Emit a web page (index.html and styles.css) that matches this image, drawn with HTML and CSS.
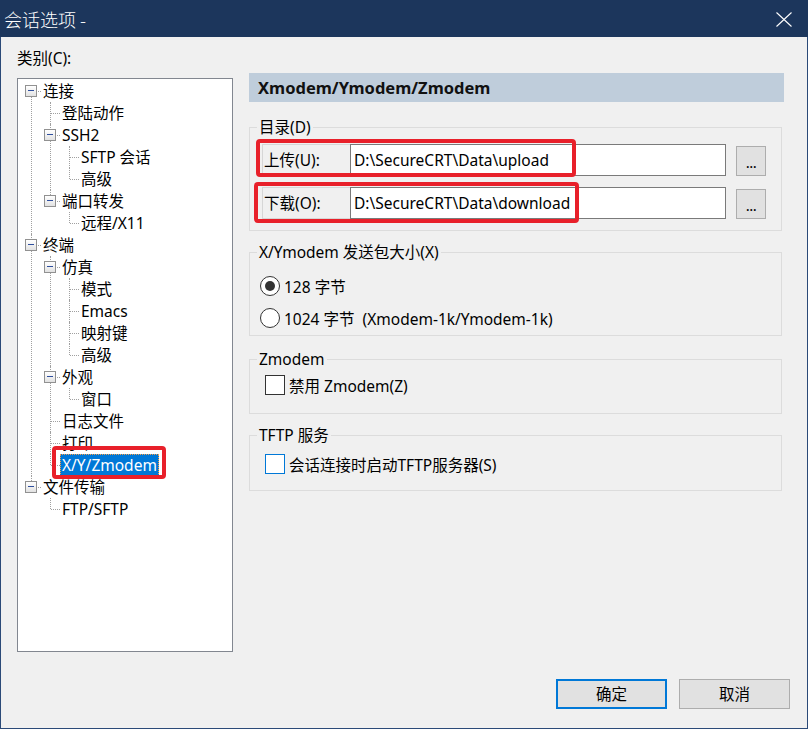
FILE: index.html
```html
<!DOCTYPE html>
<html lang="zh-CN">
<head>
<meta charset="utf-8">
<title>会话选项</title>
<link rel="stylesheet" href="styles.css">
</head>
<body>
<div class="window">
  <div class="titlebar">
    <span class="title">会话选项 -</span>
    <svg class="close" width="16" height="15" viewBox="0 0 16 15"><path d="M0.5 0.5 L15.5 14.5 M15.5 0.5 L0.5 14.5" stroke="#ffffff" stroke-width="1.1" fill="none"/></svg>
  </div>
  <div class="content">
    <div class="main">
      <div class="left">
        <div class="cat-label">类别(C):</div>
        <div class="tree-box">
          <ul class="tree">
            <li><div class="row"><span class="exp"></span><span class="lbl">连接</span></div>
              <ul>
                <li><div class="row"><span class="noexp"></span><span class="lbl">登陆动作</span></div></li>
                <li><div class="row"><span class="exp"></span><span class="lbl">SSH2</span></div>
                  <ul>
                    <li><div class="row"><span class="noexp"></span><span class="lbl">SFTP 会话</span></div></li>
                    <li><div class="row"><span class="noexp"></span><span class="lbl">高级</span></div></li>
                  </ul>
                </li>
                <li><div class="row"><span class="exp"></span><span class="lbl">端口转发</span></div>
                  <ul>
                    <li><div class="row"><span class="noexp"></span><span class="lbl">远程/X11</span></div></li>
                  </ul>
                </li>
              </ul>
            </li>
            <li><div class="row"><span class="exp"></span><span class="lbl">终端</span></div>
              <ul>
                <li><div class="row"><span class="exp"></span><span class="lbl">仿真</span></div>
                  <ul>
                    <li><div class="row"><span class="noexp"></span><span class="lbl">模式</span></div></li>
                    <li><div class="row"><span class="noexp"></span><span class="lbl">Emacs</span></div></li>
                    <li><div class="row"><span class="noexp"></span><span class="lbl">映射键</span></div></li>
                    <li><div class="row"><span class="noexp"></span><span class="lbl">高级</span></div></li>
                  </ul>
                </li>
                <li><div class="row"><span class="exp"></span><span class="lbl">外观</span></div>
                  <ul>
                    <li><div class="row"><span class="noexp"></span><span class="lbl">窗口</span></div></li>
                  </ul>
                </li>
                <li><div class="row"><span class="noexp"></span><span class="lbl">日志文件</span></div></li>
                <li><div class="row"><span class="noexp"></span><span class="lbl">打印</span></div></li>
                <li><div class="row"><span class="noexp"></span><span class="lbl sel">X/Y/Zmodem</span></div></li>
              </ul>
            </li>
            <li><div class="row"><span class="exp"></span><span class="lbl">文件传输</span></div>
              <ul>
                <li><div class="row"><span class="noexp"></span><span class="lbl">FTP/SFTP</span></div></li>
              </ul>
            </li>
          </ul>
        </div>
      </div>
      <div class="right">
        <div class="header">Xmodem/Ymodem/Zmodem</div>
        <fieldset class="group g-dir">
          <legend>目录(D)</legend>
          <div class="dir-row up">
            <span class="dir-label">上传(U):</span>
            <span class="dir-input">D:\SecureCRT\Data\upload</span>
            <span class="browse">...</span>
          </div>
          <div class="dir-row down">
            <span class="dir-label">下载(O):</span>
            <span class="dir-input">D:\SecureCRT\Data\download</span>
            <span class="browse">...</span>
          </div>
        </fieldset>
        <fieldset class="group g-size">
          <legend>X/Ymodem 发送包大小(X)</legend>
          <div class="opt"><span class="radio checked"></span><span>128 字节</span></div>
          <div class="opt opt2"><span class="radio"></span><span>1024 字节&nbsp;&nbsp;(Xmodem-1k/Ymodem-1k)</span></div>
        </fieldset>
        <fieldset class="group g-z">
          <legend>Zmodem</legend>
          <div class="opt chk-row"><span class="check"></span><span>禁用 Zmodem(Z)</span></div>
        </fieldset>
        <fieldset class="group g-tftp">
          <legend>TFTP 服务</legend>
          <div class="opt chk-row"><span class="check focus"></span><span>会话连接时启动TFTP服务器(S)</span></div>
        </fieldset>
      </div>
    </div>
    <div class="buttons">
      <span class="btn default">确定</span>
      <span class="btn">取消</span>
    </div>
  </div>
</div>
</body>
</html>
```
FILE: styles.css
```css
*, *::before, *::after { box-sizing: border-box; }
html, body { margin: 0; padding: 0; }
body {
  width: 808px;
  height: 729px;
  overflow: hidden;
  font-family: "Noto Sans", "Noto Sans CJK SC", sans-serif;
  font-size: 15.5px;
  color: #000;
  background: #f0f0f0;
}
.window {
  width: 808px;
  height: 729px;
  border: 1px solid #2b4a78;
  border-top: none;
  display: flex;
  flex-direction: column;
  background: #f0f0f0;
}
.titlebar {
  height: 37px;
  margin: 0 -1px;
  background: #1c365c;
  display: flex;
  align-items: center;
  color: #fff;
  padding-left: 4px;
}
.title {
  font-size: 18px;
  line-height: 24px;
  font-family: "Noto Sans CJK SC", sans-serif;
  font-weight: 300;
}
.close {
  margin-left: auto;
  margin-right: 16px;
  margin-top: 1px;
}
.content {
  flex: 1;
  display: flex;
  flex-direction: column;
  padding: 11px 17px 0 16px;
}
.main {
  display: flex;
  gap: 16px;
}
.left { width: 216px; }
.cat-label {
  line-height: 20px;
  height: 20px;
  margin-bottom: 10px;
}
.tree-box {
  width: 216px;
  height: 574px;
  border: 1px solid #828790;
  background: #fff;
  overflow: hidden;
}
.tree, .tree ul {
  list-style: none;
  margin: 0;
  padding: 0;
}
.tree { padding: 1px 0 0 7px; }
.tree ul { padding-left: 19px; }
.tree li { position: relative; }
.tree li::before {
  content: "";
  position: absolute;
  left: 6px;
  top: 0;
  bottom: 0;
  border-left: 1px dotted #a0a0a0;
}
.tree li:last-child::before { bottom: auto; height: 11px; }
.tree > li:first-child::before { top: 11px; }
.tree li::after {
  content: "";
  position: absolute;
  left: 7px;
  top: 11px;
  width: 9px;
  border-top: 1px dotted #a0a0a0;
}
.row {
  height: 22px;
  display: flex;
  align-items: center;
  position: relative;
  z-index: 1;
}
.exp, .noexp {
  width: 12px;
  height: 12px;
  flex: none;
  position: relative;
}
.exp {
  border: 1px solid #919191;
  background: linear-gradient(#ffffff, #e2e2e2);
}
.exp::after {
  content: "";
  position: absolute;
  left: 2px;
  right: 2px;
  top: 4px;
  height: 1px;
  background: #2f4f9e;
}
.lbl {
  margin-left: 4px;
  padding: 0 2px;
  height: 22px;
  line-height: 22px;
  white-space: nowrap;
  position: relative;
}
.lbl.sel {
  background: #0078d7;
  color: #fff;
  outline: 1px dotted #f5a04a;
  outline-offset: -1px;
}
.lbl.sel::after {
  content: "";
  position: absolute;
  left: -8px;
  right: -7px;
  top: -8px;
  bottom: -3px;
  border: 4px solid #e8202a;
  border-radius: 4px;
}
.right { width: 535px; }
.header {
  margin-top: 25px;
  height: 29px;
  background: #bfcddb;
  font-weight: bold;
  font-size: 16.5px;
  line-height: 29px;
  padding-left: 9px;
  color: #111;
}
.group {
  margin: 0 2px 0 0;
  border: 1px solid #dcdcdc;
  padding: 0 15px 0 9px;
  min-width: 0;
}
.group legend {
  padding: 0 2px;
  margin-left: -2px;
  line-height: 18px;
  height: 18px;
}
.g-dir { margin-top: 16px; padding-top: 8px; padding-bottom: 11px; }
.dir-row {
  display: flex;
  align-items: center;
  height: 32px;
  margin-left: 3px;
  position: relative;
}
.dir-row.down { margin-top: 11px; }
.dir-label {
  width: 88px;
  height: 32px;
  line-height: 30px;
  border: 1px solid #d6d6d6;
  border-right: none;
  padding-left: 1px;
  flex: none;
}
.dir-input {
  width: 376px;
  height: 32px;
  line-height: 30px;
  border: 1px solid #7a7a7a;
  background: #fff;
  padding-left: 3px;
  flex: none;
  white-space: nowrap;
}
.browse {
  margin-left: 10px;
  width: 30px;
  height: 30px;
  margin-top: 2px;
  background: #e1e1e1;
  border: 1px solid #adadad;
  text-align: center;
  line-height: 30px;
  font-size: 15px;
  letter-spacing: -0.5px;
  flex: none;
}
.dir-row::after {
  content: "";
  position: absolute;
  border: 4px solid #e8202a;
  border-radius: 4px;
}
.dir-row.up::after { left: -6px; top: -5px; width: 320px; height: 38px; }
.dir-row.down::after { left: -8px; top: -5px; width: 325px; height: 41px; }
.g-size { margin-top: 12px; padding-top: 14px; padding-bottom: 6px; }
.opt {
  display: flex;
  align-items: center;
  height: 22px;
  gap: 4px;
  margin-left: 1px;
  white-space: nowrap;
}
.opt2 { margin-top: 10px; }
.radio {
  width: 20px;
  height: 20px;
  border: 1px solid #333;
  border-radius: 50%;
  background: #fff;
  flex: none;
  display: flex;
  align-items: center;
  justify-content: center;
}
.radio.checked::after {
  content: "";
  width: 10px;
  height: 10px;
  border-radius: 50%;
  background: #333;
}
.g-z { margin-top: 14px; padding-top: 6px; padding-bottom: 17px; }
.g-tftp { margin-top: 12px; padding-top: 9px; padding-bottom: 15px; }
.chk-row { margin-left: 6px; }
.check {
  width: 20px;
  height: 20px;
  border: 1px solid #333;
  background: #fff;
  flex: none;
}
.check.focus { border-color: #0078d7; }
.buttons {
  margin-top: 27px;
  display: flex;
  justify-content: flex-end;
  gap: 12px;
}
.btn {
  width: 111px;
  height: 30px;
  background: #e1e1e1;
  border: 1px solid #adadad;
  text-align: center;
  line-height: 28px;
}
.btn.default {
  border: 2px solid #0078d7;
  line-height: 26px;
}
```
